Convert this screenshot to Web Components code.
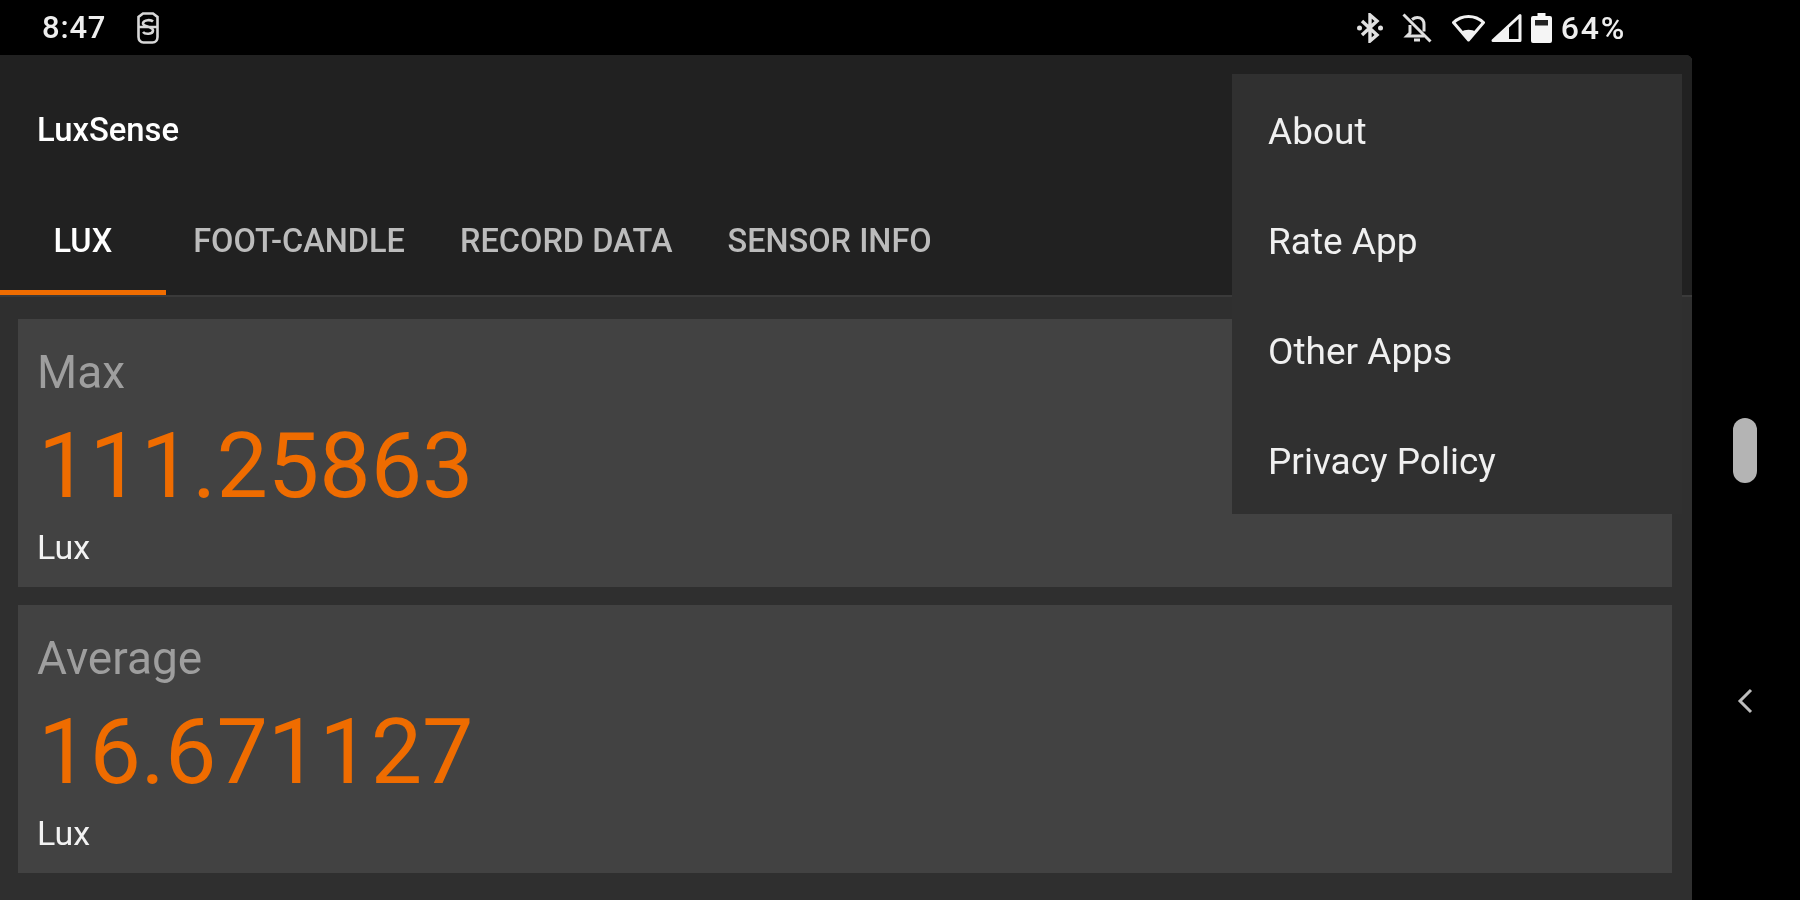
<!DOCTYPE html>
<html>
<head>
<meta charset="utf-8">
<title>LuxSense</title>
<style>
  html, body { margin: 0; height: 100%; background: #000; overflow: hidden; }
  body { font-family: Roboto, "Liberation Sans", sans-serif; color: #fff; }
</style>
</head>
<body>
<device-screen>
  <status-bar time="8:47" battery="64%"></status-bar>
  <app-panel>
    <app-toolbar slot="top" title="LuxSense">
      <tab-item active>LUX</tab-item>
      <tab-item>FOOT-CANDLE</tab-item>
      <tab-item>RECORD DATA</tab-item>
      <tab-item>SENSOR INFO</tab-item>
    </app-toolbar>
    <reading-card label="Max" value="111.25863" unit="Lux"></reading-card>
    <reading-card label="Average" value="16.671127" unit="Lux"></reading-card>
    <overflow-menu slot="menu">
      <menu-row>About</menu-row>
      <menu-row>Rate App</menu-row>
      <menu-row>Other Apps</menu-row>
      <menu-row>Privacy Policy</menu-row>
    </overflow-menu>
  </app-panel>
  <nav-rail></nav-rail>
</device-screen>

<script>
class DeviceScreen extends HTMLElement {
  constructor() {
    super();
    this.attachShadow({ mode: 'open' });
    this.shadowRoot.innerHTML = `
      <style>
        :host {
          display: grid;
          grid-template-columns: 1692px 108px;
          grid-template-rows: 55px 845px;
          width: 1800px;
          height: 900px;
          background: #000;
          filter: blur(0.7px);
        }
        ::slotted(status-bar) { grid-column: 1 / 3; }
      </style>
      <slot></slot>
    `;
  }
}

class StatusBar extends HTMLElement {
  constructor() {
    super();
    this.attachShadow({ mode: 'open' });
  }

  connectedCallback() {
    this.shadowRoot.innerHTML = `
      <style>
        :host {
          display: flex;
          align-items: center;
          height: 55px;
          padding: 0 174px 0 42px;
          background: #000;
          color: #eee;
          font-size: 31px;
          font-weight: 500;
          letter-spacing: 0.8px;
        }
        svg { display: block; flex: none; }
        .time { margin-right: 31px; }
        .right { margin-left: auto; display: flex; align-items: center; }
        .pct { font-size: 32px; letter-spacing: 1.8px; }
      </style>
      <span class="time">${this.getAttribute('time')}</span>
      <svg width="22" height="32" viewBox="0 0 22 32" fill="none" stroke="#d8d8d8" stroke-width="2.6">
        <path d="M6 1.500h10l4.500 3.500v20c0 3-2 5.500-5 5.500H6.500c-3 0-5-2.500-5-5.500V5z"/>
        <path d="M16 9.500c-2-2-9-2-10 1.500c-1 4 10 3 10 7.500c0 4-8 4-10 1.500M1.500 15h19"/>
      </svg>
      <span class="right">
        <svg width="28" height="30" viewBox="0 0 28 30" fill="none" stroke="#e0e0e0" stroke-width="3.400" style="margin-right:18px">
          <path d="M6 8l15 14-7 6V2l7 6L6 22"/>
          <circle cx="3.500" cy="15" r="2.500" fill="#e0e0e0" stroke="none"/>
          <circle cx="24.500" cy="15" r="2.500" fill="#e0e0e0" stroke="none"/>
        </svg>
        <svg width="30" height="30" viewBox="0 0 30 30" fill="none" stroke="#e0e0e0" stroke-width="3" style="margin-right:20px">
          <path d="M1.500 1.500l27 27"/>
          <path d="M10 6.500c5-4 12-2 12 5v7M8 12v8l-3 3h17M12 27h6"/>
        </svg>
        <svg width="33" height="28" viewBox="0 0 33 28" style="margin-right:5px">
          <path d="M16.500 26L1.500 8.500C10 .5 23 .5 31.500 8.500z" fill="none" stroke="#f2f2f2" stroke-width="3" stroke-linejoin="round"/>
          <path d="M16.500 27l-7.500-9c4-3 11-3 15 0z" fill="#f2f2f2"/>
        </svg>
        <svg width="32" height="29" viewBox="0 0 32 29" style="margin-right:9px">
          <path d="M30 2.500V27.500H3z" fill="none" stroke="#f2f2f2" stroke-width="3" stroke-linejoin="round"/>
          <path d="M19 14V27H4z" fill="#f2f2f2"/>
        </svg>
        <svg width="21" height="30" viewBox="0 0 21 30" style="margin-right:9px">
          <path d="M6.500 0h8v3H19a2 2 0 0 1 2 2v23a2 2 0 0 1-2 2H2a2 2 0 0 1-2-2V5a2 2 0 0 1 2-2h4.500z" fill="#f5f5f5"/>
          <rect x="4" y="7" width="13" height="5.500" fill="#222"/>
        </svg>
        <span class="pct">${this.getAttribute('battery')}</span>
      </span>
    `;
  }
}

class AppPanel extends HTMLElement {
  constructor() {
    super();
    this.attachShadow({ mode: 'open' });
    this.shadowRoot.innerHTML = `
      <style>
        :host {
          display: block;
          position: relative;
          height: 845px;
          background: #2f2f2f;
          border-top-right-radius: 6px;
          overflow: hidden;
        }
        .body {
          display: flex;
          flex-direction: column;
          gap: 18px;
          padding: 24px 20px 0 18px;
        }
        .menu { position: absolute; top: 19px; right: 10px; }
      </style>
      <slot name="top"></slot>
      <div class="body"><slot></slot></div>
      <div class="menu"><slot name="menu"></slot></div>
    `;
  }
}

class AppToolbar extends HTMLElement {
  constructor() {
    super();
    this.attachShadow({ mode: 'open' });
  }

  connectedCallback() {
    this.shadowRoot.innerHTML = `
      <style>
        :host {
          display: block;
          height: 240px;
          background: #212121;
          box-shadow: 0 2px 0 #3a3a3a;
        }
        .title {
          height: 150px;
          padding-left: 37px;
          box-sizing: border-box;
          padding-top: 52px;
          font-size: 32.800px;
          line-height: 46px;
          font-weight: 500;
          color: #fff;
        }
        .tabs { display: flex; height: 90px; }
      </style>
      <div class="title">${this.getAttribute('title')}</div>
      <div class="tabs"><slot></slot></div>
    `;
  }
}

class TabItem extends HTMLElement {
  constructor() {
    super();
    this.attachShadow({ mode: 'open' });
    this.shadowRoot.innerHTML = `
      <style>
        :host {
          display: block;
          position: relative;
          box-sizing: border-box;
          height: 90px;
          padding: 18px 27.500px 0;
          font-size: 32.500px;
          line-height: 36px;
          font-weight: 500;
          white-space: nowrap;
          color: #bcbcbc;
        }
        :host([active]) {
          color: #fff;
          padding: 18px 53.500px 0;
        }
        :host([active])::after {
          content: '';
          position: absolute;
          left: 0;
          right: 0;
          bottom: 0;
          height: 5px;
          background: #ef6c00;
        }
      </style>
      <slot></slot>
    `;
  }
}

class ReadingCard extends HTMLElement {
  constructor() {
    super();
    this.attachShadow({ mode: 'open' });
  }

  connectedCallback() {
    this.shadowRoot.innerHTML = `
      <style>
        :host {
          display: block;
          box-sizing: border-box;
          height: 268px;
          padding: 24.500px 19px 0;
          background: #424242;
        }
        .label { font-size: 46px; line-height: 56px; color: #9e9e9e; }
        .value {
          font-size: 91.500px;
          line-height: 110px;
          color: #ef6c00;
          margin: 11.500px 0 0 1px;
        }
        .unit { font-size: 34px; line-height: 40px; margin-top: 6px; color: #f2f2f2; }
      </style>
      <div class="label">${this.getAttribute('label')}</div>
      <div class="value">${this.getAttribute('value')}</div>
      <div class="unit">${this.getAttribute('unit')}</div>
    `;
  }
}

class OverflowMenu extends HTMLElement {
  constructor() {
    super();
    this.attachShadow({ mode: 'open' });
    this.shadowRoot.innerHTML = `
      <style>
        :host {
          display: flex;
          flex-direction: column;
          width: 450px;
          background: #303030;
        }
      </style>
      <slot></slot>
    `;
  }
}

class MenuRow extends HTMLElement {
  constructor() {
    super();
    this.attachShadow({ mode: 'open' });
    this.shadowRoot.innerHTML = `
      <style>
        :host {
          display: flex;
          align-items: center;
          box-sizing: border-box;
          height: 110px;
          padding: 4px 0 0 36px;
          font-size: 37px;
          color: #f0f0f0;
        }
      </style>
      <slot></slot>
    `;
  }
}

class NavRail extends HTMLElement {
  constructor() {
    super();
    this.attachShadow({ mode: 'open' });
    this.shadowRoot.innerHTML = `
      <style>
        :host {
          display: flex;
          flex-direction: column;
          align-items: center;
          padding: 363px 2px 0 0;
          background: #000;
        }
        .handle {
          width: 24px;
          height: 65px;
          border-radius: 12px;
          background: #b4b4b4;
          margin-bottom: 205px;
        }
        svg { display: block; }
      </style>
      <div class="handle"></div>
      <svg width="16" height="26" viewBox="0 0 16 26" fill="none" stroke="#bdbdbd" stroke-width="3">
        <path d="M14 2L3 13l11 11"/>
      </svg>
    `;
  }
}

customElements.define('device-screen', DeviceScreen);
customElements.define('status-bar', StatusBar);
customElements.define('app-panel', AppPanel);
customElements.define('app-toolbar', AppToolbar);
customElements.define('tab-item', TabItem);
customElements.define('reading-card', ReadingCard);
customElements.define('overflow-menu', OverflowMenu);
customElements.define('menu-row', MenuRow);
customElements.define('nav-rail', NavRail);
</script>
</body>
</html>
